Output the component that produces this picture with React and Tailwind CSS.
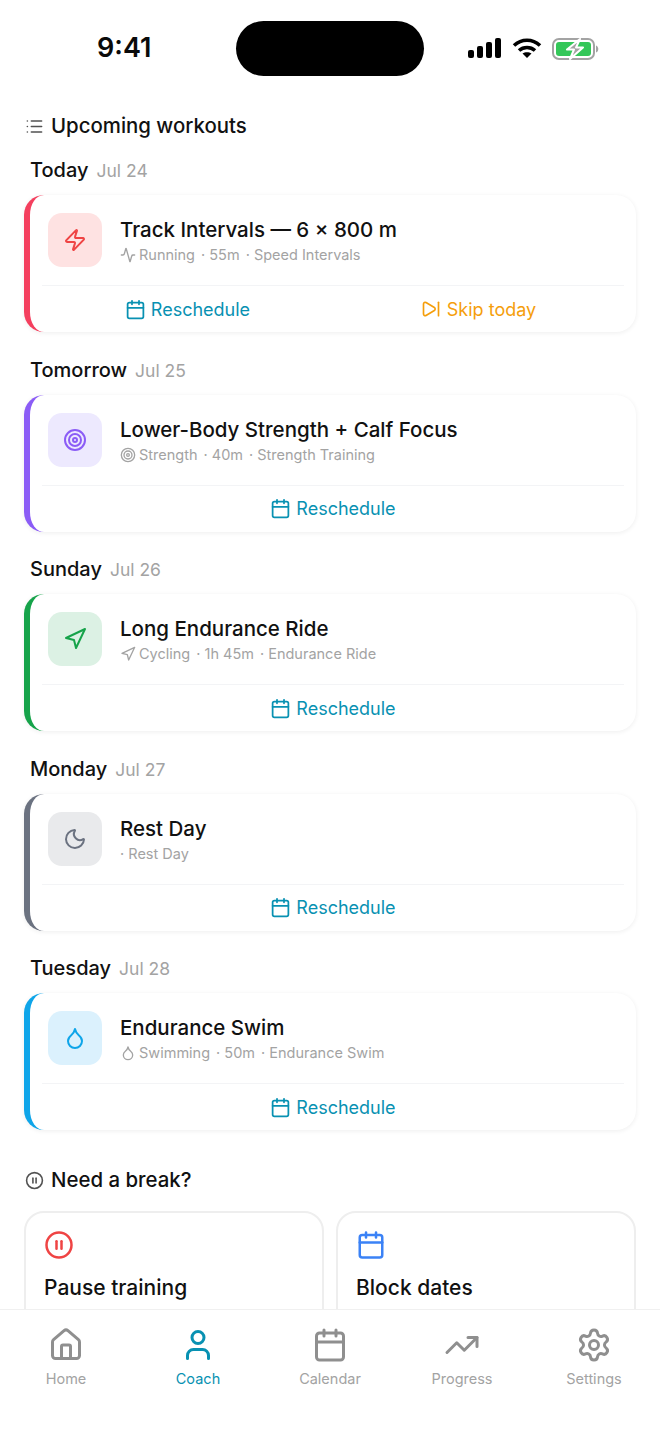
import { Activity, Calendar, CirclePause, Droplet, House, List, Moon, Navigation, Settings, SkipForward, Target, TrendingUp, User, Zap } from 'lucide-react'

const workouts = [
  {
    day: 'Today', date: 'Jul 24', title: 'Track Intervals — 6 × 800 m', Icon: Zap, SubIcon: Activity,
    sub: ['Running', '55m', 'Speed Intervals'], border: 'border-l-[#f43f5e]', tile: 'bg-[#fee2e2]', color: 'text-[#ef4444]', skip: true,
  },
  {
    day: 'Tomorrow', date: 'Jul 25', title: 'Lower-Body Strength + Calf Focus', Icon: Target, SubIcon: Target,
    sub: ['Strength', '40m', 'Strength Training'], border: 'border-l-[#8b5cf6]', tile: 'bg-[#ede9fe]', color: 'text-[#8b5cf6]',
  },
  {
    day: 'Sunday', date: 'Jul 26', title: 'Long Endurance Ride', Icon: Navigation, SubIcon: Navigation,
    sub: ['Cycling', '1h 45m', 'Endurance Ride'], border: 'border-l-[#16a34a]', tile: 'bg-[#dcf1e4]', color: 'text-[#16a34a]',
  },
  {
    day: 'Monday', date: 'Jul 27', title: 'Rest Day', Icon: Moon,
    sub: ['', '', 'Rest Day'], border: 'border-l-[#6b7280]', tile: 'bg-[#e9eaec]', color: 'text-[#6b7280]',
  },
  {
    day: 'Tuesday', date: 'Jul 28', title: 'Endurance Swim', Icon: Droplet, SubIcon: Droplet,
    sub: ['Swimming', '50m', 'Endurance Swim'], border: 'border-l-[#0ea5e9]', tile: 'bg-[#dbf1fd]', color: 'text-[#0ea5e9]',
  },
]

const tabs = [
  { label: 'Home', Icon: House },
  { label: 'Coach', Icon: User, active: true },
  { label: 'Calendar', Icon: Calendar },
  { label: 'Progress', Icon: TrendingUp },
  { label: 'Settings', Icon: Settings },
]

function StatusBar() {
  return (
    <div className="flex h-[96px] shrink-0">
      <div className="w-[236px] pl-[97px] pt-[31px] text-[27px] leading-[34px] font-semibold text-[#0a0a0a]">9:41</div>
      <div className="mt-[21px] h-[55px] w-[188px] rounded-[28px] bg-black" />
      <div className="flex items-start gap-[10px] pl-[44px] pt-[37px]">
        <svg width="34" height="22" viewBox="0 0 34 22" fill="#000">
          <rect x="0" y="13" width="6" height="8" rx="2" />
          <rect x="9" y="9" width="6" height="12" rx="2" />
          <rect x="18" y="5" width="6" height="16" rx="2" />
          <rect x="27" y="1" width="6" height="20" rx="2" />
        </svg>
        <svg width="30" height="22" viewBox="0 0 30 22" fill="none" stroke="#000" strokeWidth="3.6">
          <path d="M2 8.500C9.500 1.500 20.500 1.500 28 8.500" />
          <path d="M7 13.500C11.500 9.500 18.500 9.500 23 13.500" />
          <path d="M15 21l-4.500-4.500C13 14.800 17 14.800 19.500 16.500z" fill="#000" stroke="none" />
        </svg>
        <svg width="47" height="23" viewBox="0 0 47 23" fill="none">
          <rect x="1" y="2" width="41" height="20" rx="6" stroke="#a3a3a3" strokeWidth="2" />
          <rect x="4" y="5" width="35" height="14" rx="3" fill="#34c759" />
          <path d="M44 8.500c1.500.5 2.300 2 2.300 3.500s-.8 3-2.300 3.500z" fill="#a3a3a3" />
          <path d="M28 2L15 12.500h7L18 22 31 10.500h-7z" fill="#a3a3a3" stroke="#fff" strokeWidth="2" strokeLinejoin="round" />
        </svg>
      </div>
    </div>
  )
}

function WorkoutCard({ workout }) {
  const { day, date, title, Icon, SubIcon, sub, border, tile, color, skip } = workout
  const [sport, time, type] = sub
  return (
    <section>
      <div className="flex h-[28px] items-baseline gap-[8px] px-[30px] leading-[28px]">
        <span className="text-[20px] font-medium text-[#111]">{day}</span>
        <span className="text-[17.5px] text-[#a3a3a3]">{date}</span>
      </div>
      <div className={`mx-[24px] mt-[11px] rounded-[20px] border-l-[6px] bg-white shadow-[0_1px_5px_rgba(0,0,0,0.07)] ${border}`}>
        <div className="flex h-[90px] items-center gap-[18px] pl-[18px]">
          <div className={`flex h-[54px] w-[54px] items-center justify-center rounded-[14px] ${tile}`}>
            <Icon size={24} className={color} />
          </div>
          <div className="pt-[2px]">
            <div className="text-[20.5px] leading-[28px] font-medium text-[#111]">{title}</div>
            <div className="flex items-center text-[14.5px] leading-[22px] text-[#a3a3a3]">
              {SubIcon && <SubIcon size={16} className="mr-[3px]" />}
              {sport && <span className="mr-[6px]">{sport}</span>}
              {time && <span className="mr-[6px]">· {time}</span>}
              <span>· {type}</span>
            </div>
          </div>
        </div>
        <div className="mx-[12px] flex h-[47px] border-t border-[#f3f4f6]">
          <button className="flex flex-1 items-center justify-center gap-[5px] text-[18px] text-[#0891b2]">
            <Calendar size={21} />
            Reschedule
          </button>
          {skip && (
            <button className="flex flex-1 items-center justify-center gap-[6px] text-[18px] text-[#f59e0b]">
              <SkipForward size={20} />
              Skip today
            </button>
          )}
        </div>
      </div>
    </section>
  )
}

export default function App() {
  return (
    <div className="flex h-[1434px] w-[660px] flex-col overflow-hidden bg-white font-['Inter',sans-serif]">
      <StatusBar />
      <main className="min-h-0 flex-1 overflow-hidden">
        <div className="flex h-[60px] items-center gap-[7px] pl-[25px]">
          <List size={19} className="text-[#525252]" />
          <h2 className="text-[20.4px] font-medium text-[#111]">Upcoming workouts</h2>
        </div>
        <div className="flex flex-col gap-[23.5px]">
          {workouts.map((w) => <WorkoutCard key={w.day} workout={w} />)}
        </div>
        <div className="mt-[34px] flex items-center gap-[7px] pl-[25px]">
          <CirclePause size={19} className="text-[#525252]" />
          <h2 className="text-[20.4px] leading-[32px] font-medium text-[#111]">Need a break?</h2>
        </div>
        <div className="mt-[15px] grid grid-cols-2 gap-[12px] px-[24px]">
          <div className="h-[140px] rounded-[20px] border-2 border-[#eeeeee] px-[18px] pt-[17px]">
            <CirclePause size={30} className="text-[#ef4444]" />
            <div className="mt-[12px] text-[21px] font-medium text-[#111]">Pause training</div>
          </div>
          <div className="h-[140px] rounded-[20px] border-2 border-[#eeeeee] px-[18px] pt-[17px]">
            <Calendar size={30} className="text-[#3b82f6]" />
            <div className="mt-[12px] text-[21px] font-medium text-[#111]">Block dates</div>
          </div>
        </div>
      </main>
      <nav className="grid h-[125px] shrink-0 grid-cols-5 border-t border-[#f0f0f0] bg-white pt-[17px]">
        {tabs.map(({ label, Icon, active }) => (
          <div key={label} className={`flex flex-col items-center ${active ? 'text-[#0891b2]' : 'text-[#a3a3a3]'}`}>
            <Icon size={36} strokeWidth={2} className={active ? '' : 'text-[#8f8f8f]'} />
            <span className="mt-[5px] text-[14.5px] leading-[22px]">{label}</span>
          </div>
        ))}
      </nav>
    </div>
  )
}
